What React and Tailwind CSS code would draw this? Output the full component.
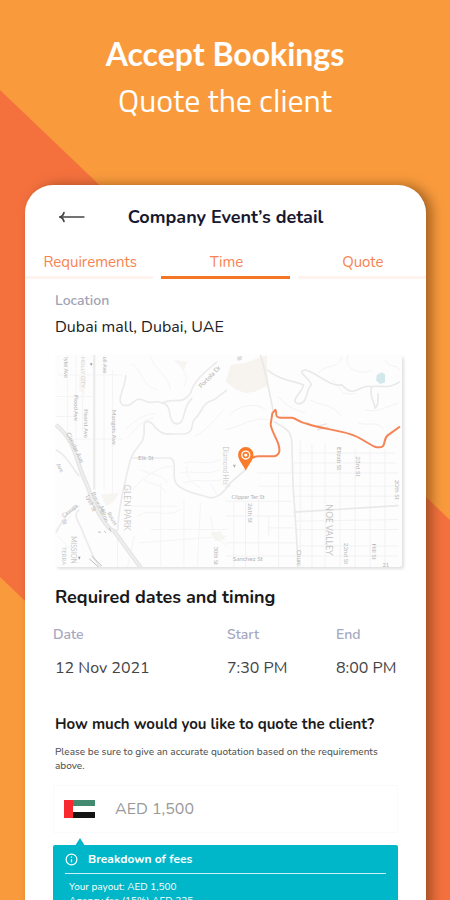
import React, { useState } from 'react';

const tabs = ['Requirements', 'Time', 'Quote'];

const slots = [{ date: '12 Nov 2021', start: '7:30 PM', end: '8:00 PM' }];

function Backdrop() {
  return (
    <svg
      className="absolute inset-0 h-full w-full"
      viewBox="0 0 450 900"
      preserveAspectRatio="xMidYMin slice"
      aria-hidden="true"
    >
      <rect width="450" height="900" fill="#f99b3d" />
      <path d="M0 90L450 520V1007L0 577Z" fill="#f4713e" />
    </svg>
  );
}

function BackArrow() {
  return (
    <svg width="26" height="12" viewBox="0 0 26 12" fill="none" stroke="#444" strokeLinecap="round" aria-hidden="true">
      <path d="M1 6H25" strokeWidth="1.300" />
      <path d="M5 1.500C4.500 4 3 5.400 1 6C3 6.600 4.500 8 5 10.500" strokeWidth="1.600" />
    </svg>
  );
}

function MapLabel({ x, y, r = 90, size = 17, children, ...rest }) {
  return (
    <text transform={`translate(${x} ${y}) rotate(${r})`} fontSize={size} fill="#b4b4b4" {...rest}>
      {children}
    </text>
  );
}

function LocationMap() {
  return (
    <svg
      className="block h-auto w-full rounded-xs bg-[#fdfdfd] font-['Lato',sans-serif] shadow-[2px_2px_3px_rgba(0,0,0,0.12)]"
      viewBox="0 0 1044 639"
      fill="none"
      role="img"
      aria-label="Map of the location"
    >
      {/* west side */}
      <g transform="translate(-12 -15)">
        <g stroke="#f4f4f4" strokeWidth="3">
          <path d="M20 75H215M15 140H130M60 268H215M50 15V250M75 15V300M95 15V250M160 15V420M185 60V450M15 200H70" />
          <path d="M245 420C300 360 340 350 365 350M245 470H380M300 540H530M265 580L530 560M330 400V650M400 450V650M450 460L440 650" />
          <path d="M270 360C310 380 330 370 350 400M280 390C310 410 330 400 345 430M260 500C300 470 340 510 390 480" />
          <path d="M400 340C440 330 470 350 510 330M390 370C430 360 460 380 510 360M400 400C440 385 470 400 515 390M410 350C400 370 420 400 450 415" />
          <path d="M240 40C280 60 270 110 320 120M300 20C310 60 350 70 360 120M380 30C390 60 420 70 400 110M225 240C250 210 290 190 315 192M230 265C260 230 280 205 310 205" />
          <path d="M430 260C460 250 490 210 520 180M480 400L500 440M480 500L490 560L530 590M20 560L60 600M60 500L15 540M200 560V655M250 560L230 655" />
        </g>
        <path d="M130 15V420" stroke="#ececec" strokeWidth="7" />
        <g stroke="#ebebeb" strokeWidth="5" strokeLinejoin="round">
          <path d="M225 75C225 110 195 150 215 165C250 175 245 140 275 150C310 170 310 145 335 160C370 140 390 170 420 130C430 90 470 60 500 35" />
          <path d="M335 160C365 165 350 205 370 220C410 235 390 170 425 145" />
          <path d="M200 545C205 450 225 390 235 345C245 290 280 290 280 250V222C290 205 305 220 315 235C340 260 350 252 405 252C430 245 420 230 430 210C460 185 450 160 490 150L530 120" />
          <path d="M240 325H360C385 340 355 390 385 410C410 430 450 435 480 445C510 445 520 420 540 405" />
          <path d="M15 300C50 320 60 350 85 380M85 480C60 500 90 520 100 560C120 600 130 640 150 655M15 550C40 500 60 480 85 470" />
        </g>
        <path d="M15 225C80 280 70 330 110 410C130 480 170 540 190 545L270 655" stroke="#e5e5e5" strokeWidth="13" />
        <path d="M15 225C80 280 70 330 110 410C130 480 170 540 190 545L270 655" stroke="#efefef" strokeWidth="5" />
        <path d="M150 435L205 430L190 455L165 470ZM370 30L410 35L400 60ZM85 80L105 85L100 135L85 120Z" fill="#f7f5f1" />
        <path d="M480 550L510 545L525 570L495 575Z" fill="#f7f5f1" />
        <path d="M115 628L145 655M122 620L153 650M142 548H150M160 545L165 550M175 535L180 545" stroke="#bdbdbd" strokeWidth="3" />
        <path d="M117 40H125L121 48ZM81 622H89L85 631Z" fill="#999" />
        <MapLabel x={40} y={22}>lyke Ave</MapLabel>
        <MapLabel x={90} y={20} fill="#d2d2d2">HOLLY CITY</MapLabel>
        <MapLabel x={155} y={20}>oil Ave</MapLabel>
        <MapLabel x={70} y={135} size={18}>Flood Ave</MapLabel>
        <MapLabel x={99} y={178} size={18}>Hearst Ave</MapLabel>
        <MapLabel x={183} y={180} size={19}>Mangels Ave</MapLabel>
        <MapLabel x={45} y={252} r={64} size={19}>Circular Ave</MapLabel>
        <MapLabel x={15} y={345} r={60}>Ave</MapLabel>
        <MapLabel x={121} y={430} r={65}>Bosworth</MapLabel>
        <MapLabel x={104} y={440} r={65}>Lyell St</MapLabel>
        <MapLabel x={146} y={472} r={70}>Milton</MapLabel>
        <MapLabel x={168} y={492} r={58}>Rouss</MapLabel>
        <MapLabel x={38} y={505} r={-38}>Cayuga</MapLabel>
        <MapLabel x={33} y={512} r={70}>St</MapLabel>
        <MapLabel x={60} y={560} size={20} fill="#cacaca">MISSION</MapLabel>
        <MapLabel x={32} y={592} size={18} fill="#cacaca">TERRA</MapLabel>
        <MapLabel x={221} y={405} size={26} fill="#cfcfcf">GLEN PARK</MapLabel>
        <MapLabel x={262} y={331} r={0} size={19}>Elk St</MapLabel>
        <MapLabel x={452} y={116} r={-46} size={19}>Portola Dr</MapLabel>
        <MapLabel x={490} y={592} size={17}>30th St</MapLabel>
        <MapLabel x={518} y={290} size={20} fill="#cecece">Diamond Hts</MapLabel>
      </g>

      {/* east side */}
      <g transform="translate(513 -15)">
        <path d="M15 45L60 38L125 15V65L130 105L90 125L60 130L30 118L0 95L10 65Z" fill="#f7f4f0" />
        <path d="M35 20L50 18L48 30L36 32Z" fill="#dededb" />
        <path d="M455 75L470 67L480 73V98L465 102L453 92Z" fill="#d3e8eb" />
        <g stroke="#f2f2f2" strokeWidth="3">
          <path d="M95 370H520M100 410H515M0 455H200M0 500H210M215 540H520M0 580H215M215 590H520M0 620H520M100 440V620M60 455V655M25 455V655M160 370V655M225 270V655M260 285V655M300 280V655M345 290V655M390 300V655M435 300V655M480 300V655M130 500V560" />
          <path d="M220 310H510M205 340H515M205 440H515M130 535H205M210 515L520 510M320 90C350 110 340 140 390 130M370 15C350 50 400 80 440 60M280 70C300 40 340 60 350 20M420 180C460 190 480 170 520 160" />
          <path d="M10 200C40 160 100 160 120 180M0 240C50 230 80 200 130 210M160 140C180 170 210 180 240 190M255 150C290 170 320 160 350 200M480 30C500 60 510 40 525 60M400 220C430 230 460 210 475 240" />
        </g>
        <g stroke="#e9e9e9" strokeWidth="5" strokeLinejoin="round">
          <path d="M105 15C120 60 130 120 145 190M125 60C170 95 200 90 235 105C230 130 190 155 220 162C250 160 240 120 258 105C255 85 210 65 240 60C280 70 310 110 350 105C390 150 400 100 440 110C470 105 490 120 525 95" />
          <path d="M440 110C430 140 450 155 450 175C465 165 455 145 460 130" />
          <path d="M145 215C190 240 200 245 200 290L203 400C205 450 215 550 218 655" />
          <path d="M205 488L520 468M0 415C20 390 40 380 60 360M275 230L305 222M275 240L310 232" />
        </g>
        <path
          d="M60 323C80 330 80 320 100 320H145C165 316 165 300 158 280C148 255 135 235 136 222L141 190L150 180C157 190 145 202 165 204H200C215 206 220 218 245 222C280 235 335 240 375 253C410 263 430 285 452 292C490 298 470 270 488 257L525 230"
          stroke="#f58455"
          strokeWidth="6"
          strokeLinejoin="round"
        />
        <path d="M61 363C53 345 38 332 38 315A23 23 0 1 1 84 315C84 332 69 345 61 363Z" fill="#fa7b29" />
        <circle cx="61" cy="316" r="12" fill="#fa7b29" stroke="#fff" strokeWidth="4" />
        <circle cx="61" cy="316" r="5" fill="#fff" />
        <path d="M22 345H31L27 355Z" fill="#b5b5b5" />
        <MapLabel x={18} y={449} r={0}>Clipper Ter St</MapLabel>
        <MapLabel x={67} y={460} size={19}>26th St</MapLabel>
        <MapLabel x={22} y={635} r={0} size={19}>Sanchez St</MapLabel>
        <MapLabel x={216} y={602} size={18}>Churc</MapLabel>
        <MapLabel x={302} y={465} size={26} fill="#c6c6c6">NOE VALLEY</MapLabel>
        <MapLabel x={335} y={292} size={19}>Elizab St</MapLabel>
        <MapLabel x={393} y={320} size={19}>23rd St</MapLabel>
        <MapLabel x={510} y={390} size={19}>20th St</MapLabel>
        <MapLabel x={357} y={580} size={19}>22nd St</MapLabel>
        <MapLabel x={441} y={582} size={19}>Hill St</MapLabel>
        <MapLabel x={472} y={652} r={0}>21</MapLabel>
      </g>
    </svg>
  );
}

function UaeFlag() {
  return (
    <svg width="31" height="18" viewBox="0 0 31 18" role="img" aria-label="UAE">
      <rect width="31" height="18" fill="#fff" />
      <rect x="8" width="23" height="6" fill="#438a70" />
      <rect x="8" y="12" width="23" height="6" fill="#151515" />
      <rect width="9" height="18" fill="#f92a2f" />
    </svg>
  );
}

function InfoIcon() {
  return (
    <svg width="13" height="13" viewBox="0 0 13 13" fill="none" stroke="#fff" aria-hidden="true">
      <circle cx="6.500" cy="6.500" r="5.400" strokeWidth="1.200" />
      <path d="M6.500 6V9.300M6.500 3.600V4.700" strokeWidth="1.200" />
    </svg>
  );
}

function App() {
  const [activeTab, setActiveTab] = useState('Time');
  const [amount, setAmount] = useState('AED 1,500');

  return (
    <div className="relative isolate flex h-screen flex-col overflow-hidden font-['Nunito','Lato',sans-serif]">
      <Backdrop />

      <header className="relative pt-8 text-center text-white">
        <h1 className="font-['Lato',sans-serif] text-[32px] leading-11 font-bold">Accept Bookings</h1>
        <p className="font-['Titillium_Web','Noto_Sans',sans-serif] text-[32px] leading-12">Quote the client</p>
      </header>

      <main className="relative mt-[61px] mr-6 ml-[25px] grow rounded-t-[28px] bg-white shadow-[6px_0_12px_rgba(90,45,10,0.5)]">
        <div className="grid grid-cols-[1fr_auto_1fr] items-center px-[34px] pt-4 leading-8">
          <button type="button" aria-label="Back" className="justify-self-start">
            <BackArrow />
          </button>
          <h2 className="text-[18px] font-bold text-[#17172f]">Company Event’s detail</h2>
        </div>

        <div role="tablist" className="mt-4 grid grid-cols-3 gap-2">
          {tabs.map(tab => (
            <button
              key={tab}
              type="button"
              role="tab"
              aria-selected={activeTab === tab}
              onClick={() => setActiveTab(tab)}
              className={`h-[30px] border-b-3 pb-[2px] pl-[2px] text-[15px] leading-6 text-[#f98350] ${
                activeTab === tab ? 'border-[#f47525]' : 'border-[#fff3ef]'
              }`}
            >
              {tab}
            </button>
          ))}
        </div>

        <div className="px-7">
          <section className="px-[2px] pt-3">
            <h3 className="text-[14px] leading-5 font-semibold text-[#9ea3b5]">Location</h3>
            <p className="mt-1 text-[16px] leading-6 text-[#222]">Dubai mall, Dubai, UAE</p>
          </section>

          <div className="-mr-1 mt-4 ml-[2px]">
            <LocationMap />
          </div>

          <section className="pt-4">
            <h3 className="px-[2px] text-[18px] leading-7 font-bold text-[#191919]">Required dates and timing</h3>
            <table className="mt-[9px] w-full table-fixed text-left">
              <thead>
                <tr className="h-7 text-[14px] text-[#a5a8c0]">
                  <th className="w-[174px] font-semibold">Date</th>
                  <th className="font-semibold">Start</th>
                  <th className="w-[62px] font-semibold">End</th>
                </tr>
              </thead>
              <tbody>
                {slots.map(slot => (
                  <tr key={slot.date} className="h-10 text-[16px] text-[#444]">
                    <td className="pl-[2px]">{slot.date}</td>
                    <td>{slot.start}</td>
                    <td className="whitespace-nowrap">{slot.end}</td>
                  </tr>
                ))}
              </tbody>
            </table>
          </section>

          <section className="pt-6">
            <label htmlFor="quote" className="block px-[2px] text-[15px] leading-6 font-bold text-[#1c1c1c]">
              How much would you like to quote the client?
            </label>
            <p className="mt-[9px] px-[2px] text-[10px] leading-[14px] font-medium text-[#555]">
              Please be sure to give an accurate quotation based on the requirements above.
            </p>
            <div className="mt-3 flex h-12 items-center gap-5 rounded-xs border border-[#fafafa] px-[10px]">
              <UaeFlag />
              <input
                id="quote"
                type="text"
                value={amount}
                onChange={e => setAmount(e.target.value)}
                className="min-w-0 grow bg-transparent text-[16px] text-[#999] focus:outline-none"
              />
            </div>
          </section>

          <section className="relative mt-3 rounded-t-xs bg-[#00b7c9] px-3 pt-1 pb-4 text-white">
            <svg className="absolute -top-2 left-[22px]" width="10" height="9" viewBox="0 0 10 9" aria-hidden="true">
              <path d="M0 9L5 1L10 9Z" fill="#00b7c9" />
            </svg>
            <div className="flex items-center gap-[10px] border-b border-white/80 pb-1">
              <InfoIcon />
              <h3 className="text-[12px] leading-5 font-bold">Breakdown of fees</h3>
            </div>
            <p className="mt-[6px] pl-1 text-[10px] leading-[14px]">Your payout: AED 1,500</p>
            <p className="pl-1 text-[10px] leading-[14px]">Agency fee (15%) AED 225</p>
          </section>
        </div>
      </main>
    </div>
  );
}

export default App;
